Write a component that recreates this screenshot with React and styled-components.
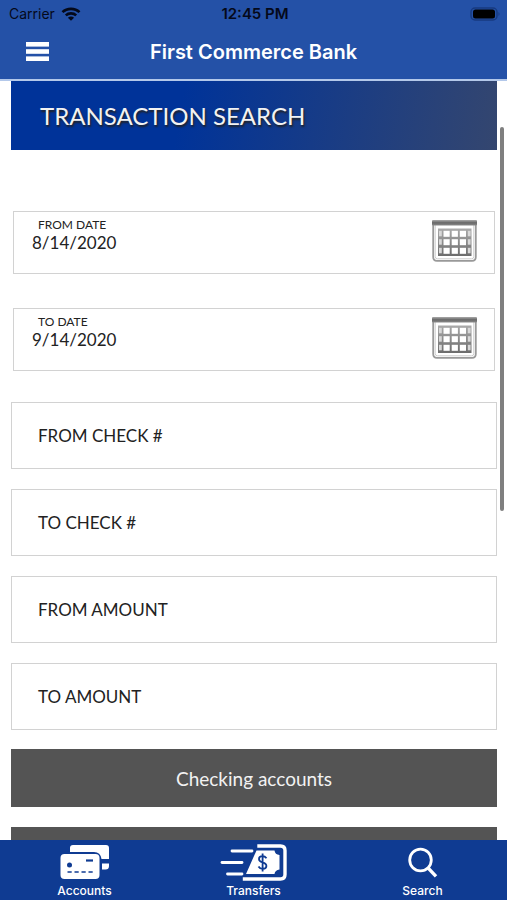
import React, { useState } from 'react'
import styled, { createGlobalStyle } from 'styled-components'

const App = () => {
  const [fromDate, setFromDate] = useState('8/14/2020')
  const [toDate, setToDate] = useState('9/14/2020')

  return (
    <Screen>
      <GlobalStyle />
      <Header>
        <StatusBar>
          <Carrier>
            Carrier
            <WifiIcon />
          </Carrier>
          <Clock>12:45 PM</Clock>
          <BatteryIcon />
        </StatusBar>
        <NavBar>
          <MenuButton type="button" aria-label="Menu">
            <MenuIcon />
          </MenuButton>
          <BankName>First Commerce Bank</BankName>
        </NavBar>
      </Header>

      <Content>
        <Banner>TRANSACTION SEARCH</Banner>
        <SearchForm>
          <DateList>
            <DateField id="from-date" label="FROM DATE" value={fromDate} onChange={setFromDate} />
            <DateField id="to-date" label="TO DATE" value={toDate} onChange={setToDate} />
          </DateList>
          <FieldList>
            {fields.map(name => (
              <Field key={name}>
                <span>{name}</span>
                <FieldInput type="text" />
              </Field>
            ))}
          </FieldList>
          <ButtonList>
            <AccountButton type="button">Checking accounts</AccountButton>
            <AccountButton type="button" aria-label="More accounts" />
          </ButtonList>
        </SearchForm>
        <ScrollThumb />
      </Content>

      <TabBar>
        <Tab href="#accounts">
          <CardsIcon />
          Accounts
        </Tab>
        <Tab href="#transfers">
          <TransferIcon />
          Transfers
        </Tab>
        <Tab href="#search">
          <SearchIcon />
          Search
        </Tab>
      </TabBar>
    </Screen>
  )
}

export default App

const fields = ['FROM CHECK #', 'TO CHECK #', 'FROM AMOUNT', 'TO AMOUNT']

const DateField = ({ id, label, value, onChange }) => (
  <DateBox>
    <DateText>
      <DateLabel htmlFor={id}>{label}</DateLabel>
      <DateInput id={id} type="text" value={value} onChange={e => onChange(e.target.value)} />
    </DateText>
    <CalendarButton type="button" aria-label={'Pick ' + label.toLowerCase()}>
      <CalendarIcon />
    </CalendarButton>
  </DateBox>
)

// Icons
const WifiIcon = () => (
  <svg width="20" height="14" viewBox="0 0 20 14" fill="none" stroke="#04091a" strokeWidth="2.6">
    <path d="M1.5 5.2C6 .7 14 .7 18.5 5.2" />
    <path d="M4.8 8.4C7.6 5.7 12.4 5.7 15.2 8.4" />
    <path d="M10 13.8L6.9 10.7C8.6 9.1 11.4 9.1 13.1 10.7Z" fill="#04091a" stroke="none" />
  </svg>
)

const BatteryIcon = () => (
  <svg width="31" height="14" viewBox="0 0 31 14">
    <rect x="1" y="1" width="26" height="12" rx="4" fill="none" stroke="#173a80" strokeWidth="1.4" />
    <rect x="3" y="2.5" width="22" height="9" rx="2.5" fill="#000" />
    <path d="M28.5 5Q30.5 7 28.5 9Z" fill="#173a80" />
  </svg>
)

const MenuIcon = () => (
  <svg width="23" height="19" viewBox="0 0 23 19" fill="#fff">
    <rect width="23" height="4.6" />
    <rect y="7.2" width="23" height="4.6" />
    <rect y="14.4" width="23" height="4.6" />
  </svg>
)

const CalendarIcon = () => (
  <svg width="45" height="42" viewBox="0 0 45 42">
    <defs>
      <linearGradient id="calendarTop" x1="0" y1="0" x2="0" y2="1">
        <stop offset="0" stopColor="#aaa" />
        <stop offset="0.5" stopColor="#686868" />
        <stop offset="1" stopColor="#8a8a8a" />
      </linearGradient>
      <linearGradient id="calendarGrid" x1="0" y1="0" x2="0" y2="1">
        <stop offset="0" stopColor="#aaa" />
        <stop offset="1" stopColor="#6c6c6c" />
      </linearGradient>
    </defs>
    <path d="M1.2 3V37Q1.2 40.8 5 40.8H40Q43.8 40.8 43.8 37V3" fill="#fff" stroke="#999" strokeWidth="1.8" />
    <path d="M3.2 5V36.5Q3.2 38.8 5.5 38.8H39.5Q41.8 38.8 41.8 36.5V5" fill="none" stroke="#ccc" />
    <rect width="45" height="5.5" rx="1" fill="url(#calendarTop)" />
    <rect x="6" y="8.5" width="33.5" height="27.5" fill="url(#calendarGrid)" />
    <g fill="#fff">
      {[10.8, 19.2, 27.8].map(y => [11.5, 19.7, 27.8].map(x => (
        <rect key={x + '-' + y} x={x} y={y} width="6.2" height="6" />
      )))}
    </g>
    <g fill="#d8d8d8">
      {[10.8, 19.2, 27.8].map(y => (
        <g key={y}>
          <rect x="7" y={y} width="2.8" height="5.5" />
          <rect x="35.8" y={y} width="2.8" height="5.5" />
        </g>
      ))}
    </g>
  </svg>
)

const CardsIcon = () => (
  <svg width="50" height="36" viewBox="0 0 50 36">
    <path d="M10 8V4Q10 1 13 1H46Q49 1 49 4V15H41.5Q40.500 8 34 8Z" fill="#fff" />
    <path d="M42 19.5H49V22Q49 25.5 45.5 25.5H42Z" fill="#fff" />
    <rect x="0.5" y="10" width="39" height="25" rx="4" fill="#fff" />
    <circle cx="9.5" cy="21" r="2.5" fill="#0f3b92" />
    <path d="M26 16.5H33" stroke="#0f3b92" strokeWidth="2.2" />
    <path d="M7.5 28H33" stroke="#0f3b92" strokeWidth="1.6" strokeDasharray="4.2 2.8" />
  </svg>
)

const TransferIcon = () => (
  <svg width="68" height="38" viewBox="0 0 68 38">
    <g stroke="#fff" strokeWidth="2.8" strokeLinecap="round">
      <path d="M12 8H32" />
      <path d="M2 19.5H22" />
      <path d="M7.5 31H22" />
    </g>
    <path
      d="M39 3H60.5Q65 3 65 7.500V31.5Q65 36 60.5 36H24.5"
      fill="none"
      stroke="#fff"
      strokeWidth="3.4"
      strokeLinecap="square"
    />
    <path d="M36.5 7.5H54.5Q55 11.5 59.5 12V26.5Q55 27 54.5 31H26Z" fill="#fff" />
    <path d="M46.5 15.2Q45 13.2 42.5 13.2Q39 13.2 39 16Q39 18.3 42.5 19.3Q46.4 20.4 46.4 23Q46.4 25.8 42.8 25.8Q39.8 25.8 38.5 23.5M42.6 10.5V28.500" fill="none" stroke="#0f3b92" strokeWidth="1.8" />
  </svg>
)

const SearchIcon = () => (
  <svg width="30" height="32" viewBox="0 0 30 32" fill="none" stroke="#fff" strokeWidth="2.8">
    <circle cx="12.5" cy="14" r="10.8" />
    <path d="M20 21.8L28 30.3" strokeWidth="3.4" />
  </svg>
)

const GlobalStyle = createGlobalStyle`
  * {
    box-sizing: border-box;
  }

  body {
    margin: 0;
    background: #fff;
    font-family: Lato, sans-serif;
    color: #222;
  }

  button, input {
    font-family: inherit;
    color: inherit;
  }

  svg {
    display: block;
  }
`;

const Screen = styled.div`
  display: flex;
  flex-direction: column;
  height: 100vh;
`;

// Header
const Header = styled.header`
  flex: none;
  background: #2451a7;
  border-bottom: 2px solid #b3c8ea;
  font-family: Inter, sans-serif;
`;

const StatusBar = styled.div`
  display: grid;
  grid-template-columns: 1fr auto 1fr;
  align-items: center;
  height: 27px;
  padding: 0 6px 0 9px;
  font-size: 14px;
  color: #04091a;

  > :last-child {
    justify-self: end;
  }
`;

const Carrier = styled.div`
  display: flex;
  align-items: center;
  gap: 6px;
`;

const Clock = styled.time`
  font-size: 15px;
  font-weight: 600;
`;

const NavBar = styled.div`
  display: grid;
  grid-template-columns: 1fr auto 1fr;
  align-items: center;
  height: 52px;
  padding: 0 16px 3px;
`;

const MenuButton = styled.button`
  justify-self: start;
  padding: 10px;
  border: none;
  background: none;
  cursor: pointer;
`;

const BankName = styled.h1`
  margin: 0;
  font-size: 20px;
  font-weight: 600;
  color: #fff;
`;

// Content
const Content = styled.main`
  position: relative;
  flex: 1;
  min-height: 0;
  padding: 0 10px 0 11px;
  overflow: hidden;
`;

const Banner = styled.h2`
  margin: 0;
  padding: 0 29px;
  background: linear-gradient(100deg, #003399 35%, #34466f 100%);
  font-size: 24px;
  font-weight: 400;
  line-height: 69px;
  color: #f2f2f2;
  text-shadow: 1px 2px 2px #222;
`;

const SearchForm = styled.form`
  display: flex;
  flex-direction: column;
`;

const DateList = styled.div`
  display: flex;
  flex-direction: column;
  gap: 34px;
  padding: 61px 2px 31px;
`;

const DateBox = styled.div`
  display: flex;
  justify-content: space-between;
  height: 63px;
  padding: 5px 17px 0 18px;
  border: 1px solid #d2d2d2;
`;

const DateText = styled.div`
  display: flex;
  flex: 1;
  flex-direction: column;
`;

const DateLabel = styled.label`
  padding-left: 6px;
  font-size: 12px;
  line-height: 16px;
`;

const DateInput = styled.input`
  width: 100%;
  height: 20px;
  padding: 0;
  border: none;
  outline: none;
  background: none;
  font-size: 17px;
  line-height: 20px;
`;

const CalendarButton = styled.button`
  align-self: flex-start;
  padding: 3px 0 0;
  border: none;
  background: none;
  cursor: pointer;
`;

const FieldList = styled.div`
  display: flex;
  flex-direction: column;
  gap: 20px;
`;

const Field = styled.label`
  display: flex;
  align-items: center;
  gap: 12px;
  height: 67px;
  padding: 0 26px;
  border: 1px solid #d2d2d2;
  font-size: 17px;
`;

const FieldInput = styled.input`
  flex: 1;
  min-width: 0;
  border: none;
  outline: none;
  background: none;
  font-size: 17px;
`;

const ButtonList = styled.div`
  display: flex;
  flex-direction: column;
  gap: 20px;
  padding-top: 19px;
`;

const AccountButton = styled.button`
  height: 58px;
  border: none;
  background: #545454;
  font-size: 19px;
  color: #f2f2f2;
  cursor: pointer;
`;

const ScrollThumb = styled.div`
  position: absolute;
  top: 46px;
  right: 3px;
  width: 4px;
  height: 50%;
  min-height: 384px;
  border-radius: 2px;
  background: #7f7f7f;
`;

// Tab bar
const TabBar = styled.nav`
  display: grid;
  flex: none;
  grid-template-columns: repeat(3, 1fr);
  height: 60px;
  background: #0f3b92;
`;

const Tab = styled.a`
  display: flex;
  flex-direction: column;
  align-items: center;
  justify-content: flex-end;
  padding-bottom: 1px;
  font-family: Inter, sans-serif;
  font-size: 12px;
  font-weight: 500;
  line-height: 16px;
  color: #fff;
  text-decoration: none;

  svg {
    margin: auto;
  }
`;
